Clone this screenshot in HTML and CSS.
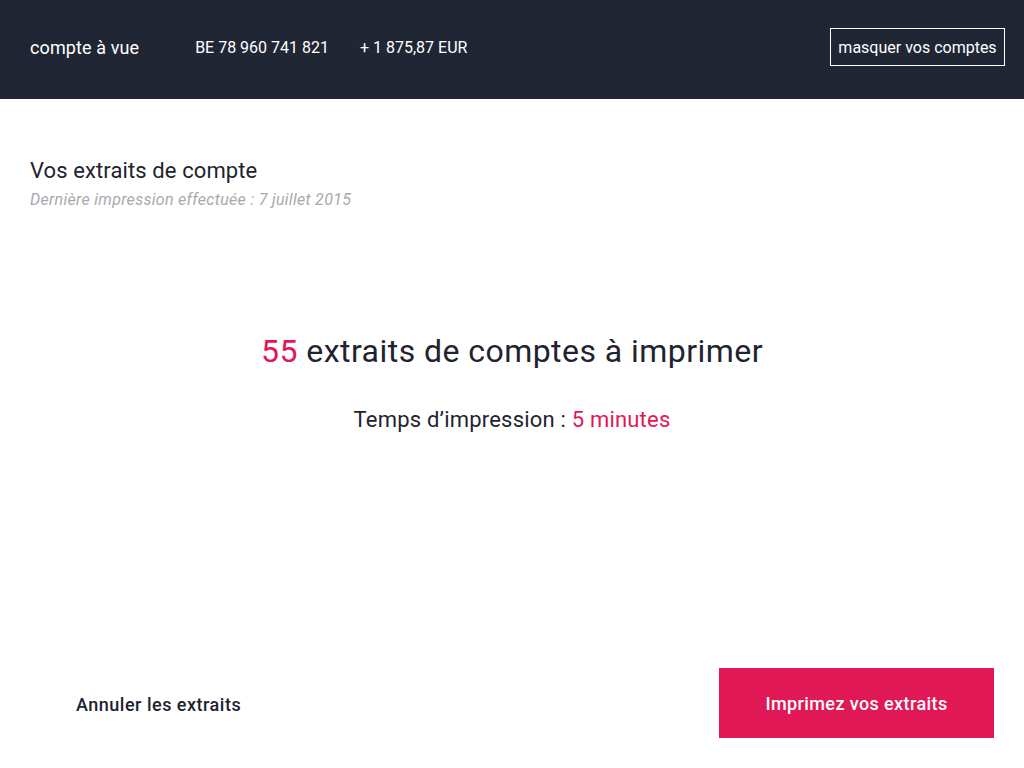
FILE: index.html
```html
<!DOCTYPE html>
<html lang="fr">
<head>
<meta charset="utf-8">
<title>Extraits de compte</title>
<link rel="stylesheet" href="styles.css">
</head>
<body>
<header class="topbar">
  <div class="account">
    <span class="acc-name">compte à vue</span>
    <span class="acc-iban">BE 78 960 741 821</span>
    <span class="acc-balance">+ 1 875,87 EUR</span>
  </div>
  <button class="hide-btn">masquer vos comptes</button>
</header>
<main class="page">
  <section class="intro">
    <h1 class="title">Vos extraits de compte</h1>
    <p class="subtitle">Dernière impression effectuée : 7 juillet 2015</p>
  </section>
  <section class="summary">
    <p class="count"><span class="accent">55</span> extraits de comptes à imprimer</p>
    <p class="duration">Temps d’impression : <span class="accent">5 minutes</span></p>
  </section>
  <footer class="actions">
    <button class="cancel">Annuler les extraits</button>
    <button class="print">Imprimez vos extraits</button>
  </footer>
</main>
</body>
</html>
```
FILE: styles.css
```css
* { box-sizing: border-box; }
html, body { margin: 0; padding: 0; }
body {
  font-family: Roboto, "Liberation Sans", sans-serif;
  background: #ffffff;
  color: #1f2330;
  width: 1024px;
  height: 768px;
  overflow: hidden;
}
.topbar {
  height: 99px;
  background: #212635;
  color: #ffffff;
  display: flex;
  align-items: center;
  justify-content: space-between;
  padding: 0 19px 0 30px;
}
.account {
  display: flex;
  align-items: center;
  margin-top: -4px;
}
.acc-name { font-size: 18px; letter-spacing: 0.1px; margin-right: 56px; }
.acc-iban { font-size: 16px; letter-spacing: 0; margin-right: 31px; }
.acc-balance { font-size: 16px; letter-spacing: 0; }
.hide-btn {
  font-family: inherit;
  background: transparent;
  color: #ffffff;
  border: 1px solid #ffffff;
  height: 38px;
  width: 175px;
  padding: 0;
  font-size: 16px;
  letter-spacing: 0;
  margin-top: -5px;
}
.page {
  height: 669px;
  display: flex;
  flex-direction: column;
}
.intro { padding: 59px 30px 0; }
.title {
  margin: 0;
  font-size: 22px;
  font-weight: 400;
  line-height: 26px;
  color: #1f2330;
  letter-spacing: 0.1px;
}
.subtitle {
  margin: 6px 0 0;
  font-size: 16px;
  font-style: italic;
  color: #a9a9ad;
  line-height: 20px;
  letter-spacing: 0.3px;
}
.summary {
  text-align: center;
  padding-top: 121px;
}
.count {
  margin: 0;
  font-size: 32px;
  line-height: 40px;
  letter-spacing: 0.45px;
  color: #1f2330;
}
.duration {
  margin: 36px 0 0;
  font-size: 22px;
  line-height: 26px;
  letter-spacing: 0.2px;
  color: #1f2330;
}
.accent { color: #e01855; }
.actions {
  margin-top: auto;
  display: flex;
  align-items: center;
  justify-content: space-between;
  padding: 0 30px 30px 76px;
}
.cancel {
  font-family: inherit;
  background: none;
  border: none;
  padding: 0;
  font-size: 18px;
  font-weight: 500;
  letter-spacing: 0.5px;
  color: #1f2330;
  margin-top: 2px;
}
.print {
  font-family: inherit;
  background: #e01855;
  color: #ffffff;
  border: none;
  width: 275px;
  height: 70px;
  font-size: 18px;
  font-weight: 500;
  letter-spacing: 0.4px;
}
```
